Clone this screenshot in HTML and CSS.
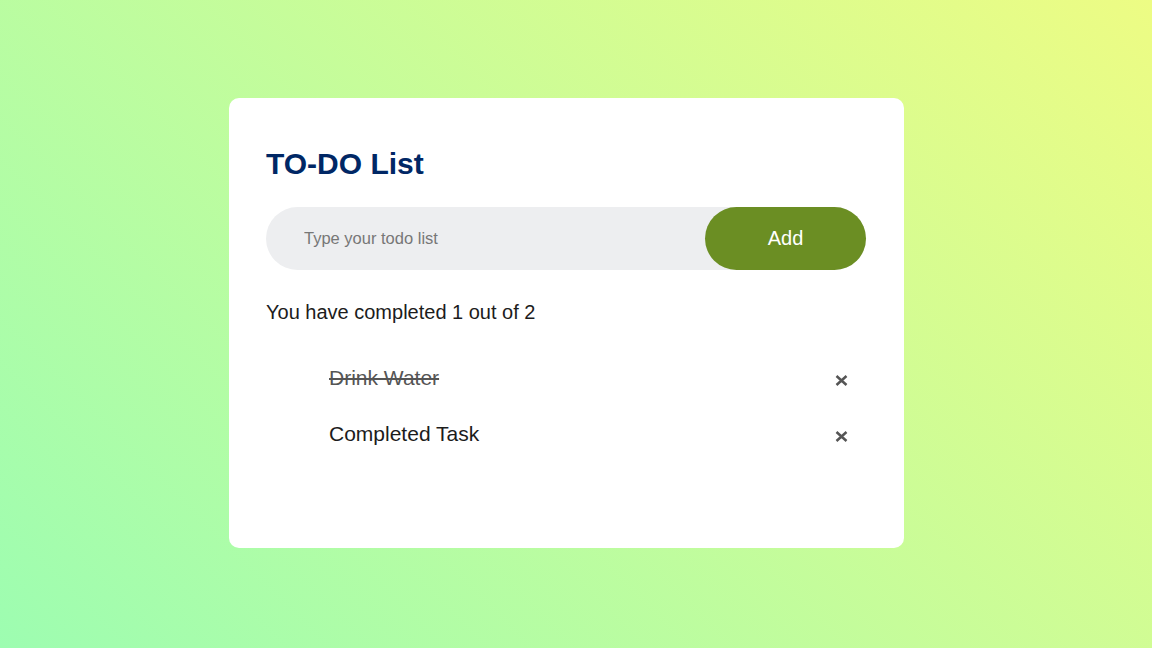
FILE: index.html
```html
<!DOCTYPE html>
<html lang="en">
<head>
<meta charset="utf-8">
<title>TO-DO List</title>
<link rel="stylesheet" href="styles.css">
</head>
<body>
<div class="container">
  <div class="todo-app">
    <h2 class="title">TO-DO List</h2>
    <div class="row">
      <input class="task-input" type="text" placeholder="Type your todo list">
      <button class="add-btn">Add</button>
    </div>
    <p class="status">You have completed 1 out of 2</p>
    <ul class="task-list">
      <li class="task checked">
        <span class="task-text">Drink Water</span>
        <span class="remove"><svg width="13" height="11" viewBox="0 0 13 11"><path d="M1.5 1 L11.5 10 M11.5 1 L1.5 10" stroke="#555" stroke-width="2.5" fill="none"/></svg></span>
      </li>
      <li class="task">
        <span class="task-text">Completed Task</span>
        <span class="remove"><svg width="13" height="11" viewBox="0 0 13 11"><path d="M1.5 1 L11.5 10 M11.5 1 L1.5 10" stroke="#555" stroke-width="2.5" fill="none"/></svg></span>
      </li>
    </ul>
  </div>
</div>
</body>
</html>
```
FILE: styles.css
```css
* {
  box-sizing: border-box;
}
html, body {
  margin: 0;
  padding: 0;
}
body {
  min-height: 100vh;
  background: linear-gradient(45deg, #9dfdb1, #edfc84);
  font-family: "Liberation Sans", Arial, sans-serif;
}
.container {
  padding: 98px 0 0 229px;
}
.todo-app {
  width: 675px;
  background: #fff;
  border-radius: 10px;
  padding: 48px 38px 86px 37px;
}
.title {
  margin: 0 0 25px 0;
  font-size: 30px;
  line-height: 36px;
  font-weight: bold;
  color: #002765;
}
.row {
  display: flex;
  height: 63px;
  background: #edeef0;
  border-radius: 32px;
}
.task-input {
  flex: 1;
  border: none;
  outline: none;
  background: transparent;
  padding: 0 20px 0 38px;
  font-family: "Liberation Sans", Arial, sans-serif;
  font-size: 16.5px;
  color: #222;
}
.task-input::placeholder {
  color: #777;
}
.add-btn {
  width: 161px;
  border: none;
  border-radius: 32px;
  background: #6b8e23;
  color: #fff;
  font-family: "Liberation Sans", Arial, sans-serif;
  font-size: 20px;
  cursor: pointer;
}
.status {
  margin: 30px 0 0 0;
  font-size: 20px;
  line-height: 24px;
  color: #1c1c1c;
}
.task-list {
  list-style: none;
  margin: 26px 0 0 0;
  padding: 0;
}
.task {
  display: flex;
  align-items: center;
  justify-content: space-between;
  padding: 16px 5px 16px 63px;
  font-size: 21px;
  line-height: 24px;
  color: #1c1c1c;
}
.task.checked .task-text {
  color: #555;
  text-decoration: line-through;
}
.remove {
  width: 40px;
  height: 24px;
  margin-top: 2px;
  margin-bottom: -2px;
  display: flex;
  align-items: center;
  justify-content: center;
}
```
